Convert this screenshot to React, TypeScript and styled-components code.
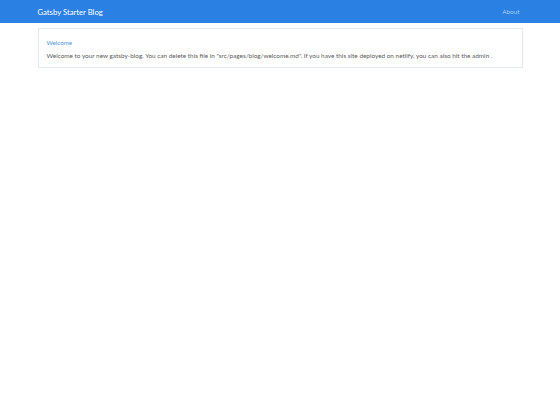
import React from "react";
import styled, { createGlobalStyle } from "styled-components";

const Global = createGlobalStyle`
  html, body { margin: 0; padding: 0; background: #ffffff; }
  body { font-family: "Lato", "Open Sans", sans-serif; color: #333; }
`;

const Navbar = styled.header`
  background: #2b80e3;
  height: 23px;
  display: flex;
  align-items: center;
`;

const NavInner = styled.div`
  width: 485px;
  margin: 0 auto;
  padding: 0 3px 0 0;
  box-sizing: border-box;
  display: flex;
  align-items: center;
  justify-content: space-between;
`;

const Brand = styled.a`
  color: #ffffff;
  font-size: 7.7px;
  text-decoration: none;
`;

const NavLink = styled.a`
  color: #a9cdf4;
  font-size: 6.4px;
  text-decoration: none;
`;

const Main = styled.main`
  width: 485px;
  margin: 5px auto 0;
`;

const Card = styled.article`
  border: 1px solid #e6e9ec;
  box-shadow: 0 1px 2px rgba(0, 0, 0, 0.04);
  padding: 9px 8px 10px 8px;
  box-sizing: border-box;
  height: 40px;
`;

const PostTitle = styled.a`
  display: block;
  color: #4a93dc;
  font-size: 6.2px;
  line-height: 9px;
  text-decoration: none;
`;

const Excerpt = styled.p`
  margin: 4px 0 0;
  color: #5a5a5a;
  font-size: 6.4px;
  line-height: 9px;
`;

export default function App() {
  return (
    <>
      <Global />
      <Navbar>
        <NavInner>
          <Brand href="#">Gatsby Starter Blog</Brand>
          <NavLink href="#">About</NavLink>
        </NavInner>
      </Navbar>
      <Main>
        <Card>
          <PostTitle href="#">Welcome</PostTitle>
          <Excerpt>
            Welcome to your new gatsby-blog. You can delete this file in
            "src/pages/blog/welcome.md". If you have this site deployed on
            netlify, you can also hit the admin .
          </Excerpt>
        </Card>
      </Main>
    </>
  );
}
